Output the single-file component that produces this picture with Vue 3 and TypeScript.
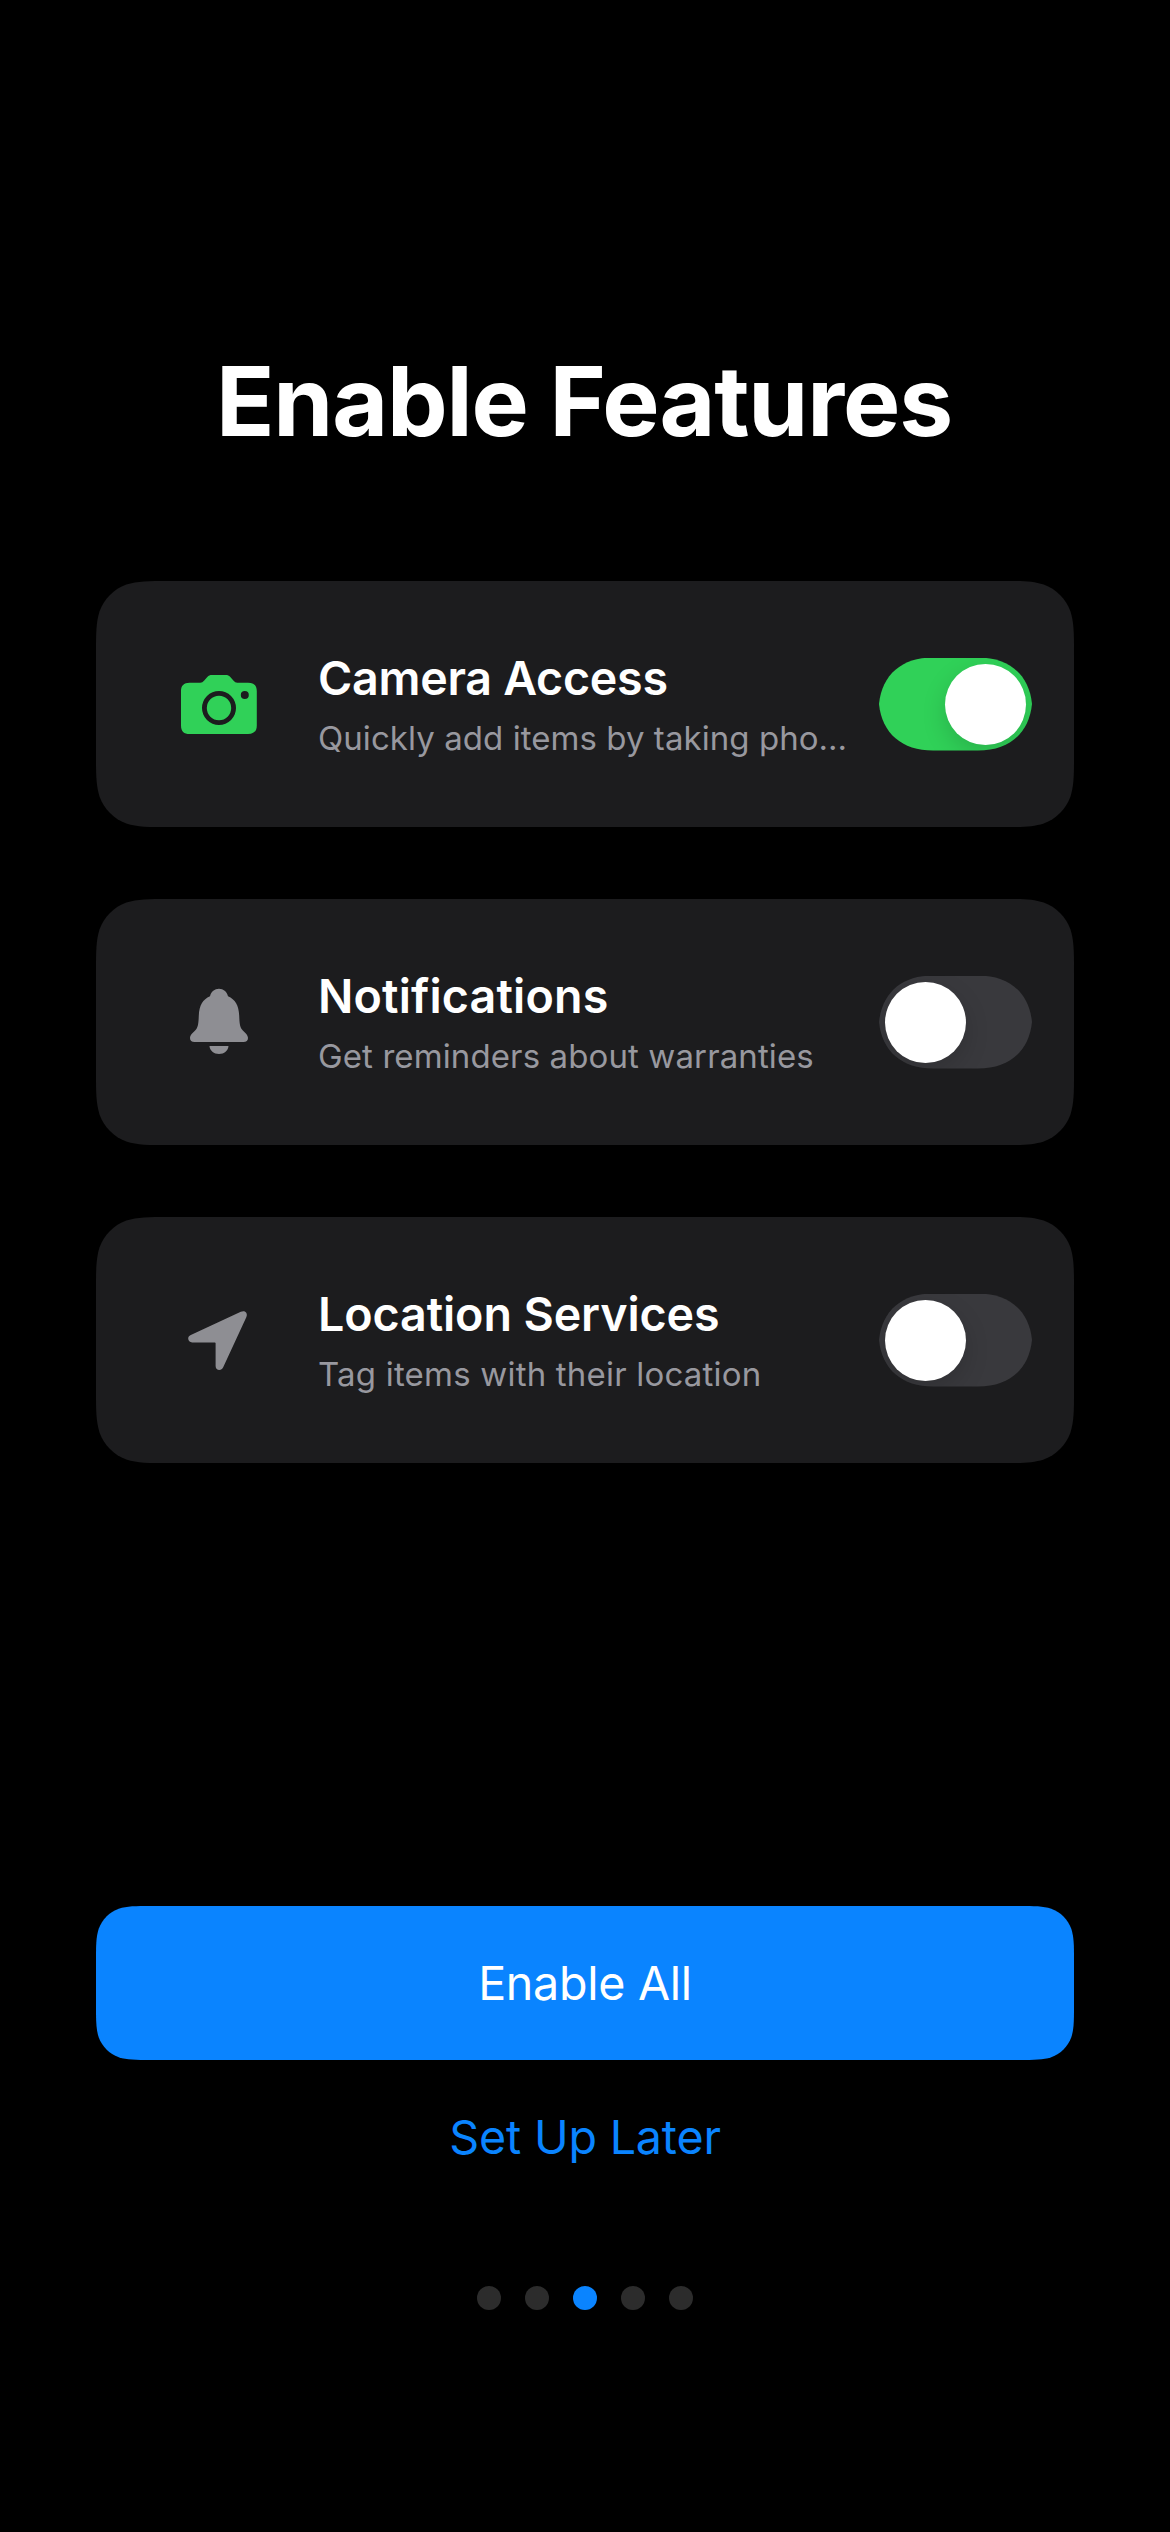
<script setup lang="ts">
import { reactive, ref } from 'vue'

type IconName = 'camera' | 'bell' | 'location'

interface Feature {
  icon: IconName
  title: string
  titleTracking: number
  detail: string
  detailTracking: number
  enabled: boolean
}

const features = reactive<Feature[]>([
  {
    icon: 'camera',
    title: 'Camera Access',
    titleTracking: -0.28,
    detail: 'Quickly add items by taking pho…',
    detailTracking: 0.06,
    enabled: true,
  },
  {
    icon: 'bell',
    title: 'Notifications',
    titleTracking: 0.15,
    detail: 'Get reminders about warranties',
    detailTracking: 0.11,
    enabled: false,
  },
  {
    icon: 'location',
    title: 'Location Services',
    titleTracking: -0.1,
    detail: 'Tag items with their location',
    detailTracking: 0.2,
    enabled: false,
  },
])

const pages = 5
const currentPage = ref(2)

function enableAll(): void {
  features.forEach((f) => (f.enabled = true))
}

// Rounded rectangle with continuous-curvature corners.
function continuousRect(w: number, h: number, r: number): string {
  const corner: [number, number][] = [
    [1.528665, 0],
    [1.088493, 0], [0.868407, 0], [0.631494, 0.074911],
    [0.372824, 0.169059], [0.169059, 0.372824], [0.074911, 0.631494],
    [0, 0.868407], [0, 1.088493], [0, 1.528665],
  ]
  const place = (right: boolean, bottom: boolean, reverse: boolean): string[] => {
    const pts = corner.map(([x, y]) => {
      const px = right ? w - x * r : x * r
      const py = bottom ? h - y * r : y * r
      return `${px.toFixed(2)} ${py.toFixed(2)}`
    })
    return reverse ? pts.reverse() : pts
  }
  const draw = (p: string[]) => `${p[0]} C${p.slice(1).join(' ')}`
  return (
    `M${draw(place(true, false, false))} L${draw(place(true, true, true))} ` +
    `L${draw(place(false, true, false))} L${draw(place(false, false, true))} Z`
  )
}

const cardShape = { clipPath: `path('${continuousRect(978, 246, 48)}')` }
const buttonShape = { clipPath: `path('${continuousRect(978, 154, 36)}')` }
</script>

<template>
  <main class="screen">
    <h1 class="heading">Enable Features</h1>

    <section class="cards">
      <article v-for="f in features" :key="f.title" class="card" :style="cardShape">
        <svg class="icon" :class="{ active: f.enabled }" viewBox="0 0 102 80" aria-hidden="true">
          <template v-if="f.icon === 'camera'">
            <path
              fill-rule="evenodd"
              d="M21.5 18.7H32.2C34 18.7 34.8 18 36 16.7L39.3 13.1C40.8 11.6 41.8 11.1 44 11.1H57.6C59.8 11.1 60.8 11.6 62.3 13.1L65.6 16.7C66.8 18 67.6 18.7 69.4 18.7H80C86 18.7 88.8 21.6 88.8 27.3V61.4C88.8 67.1 86 70 80 70H21.8C15.8 70 13 67.1 13 61.4V27.3C13 21.6 15.8 18.7 21.5 18.7ZM51 27A17 17 0 1 0 51 61A17 17 0 1 0 51 27ZM51 31.8A12.2 12.2 0 1 1 51 56.2A12.2 12.2 0 1 1 51 31.8ZM76.8 27A4 4 0 1 0 76.8 35A4 4 0 1 0 76.8 27Z"
            />
          </template>
          <template v-else-if="f.icon === 'bell'">
            <path
              d="M51 6.8C46.6 6.8 43.2 9.6 42 14.2C34.8 17.4 31.2 23.4 30.8 33.6C30.5 41 30.2 44.5 28.2 47.2C26.2 49.9 22 52.2 22 56C22 58.4 23.6 60 26.6 60H75.4C78.4 60 80 58.4 80 56C80 52.2 75.8 49.9 73.8 47.2C71.8 44.5 71.5 41 71.2 33.6C70.8 23.4 67.2 17.4 60 14.2C58.8 9.6 55.4 6.8 51 6.8Z"
            />
            <path d="M41.5 64H60.5C60.2 68.6 56.2 72 51 72S41.8 68.6 41.5 64Z" />
          </template>
          <template v-else>
            <path
              d="M22.8 35L72.8 11.7C77 9.8 80.2 13 78.3 17.2L55.2 67.2C54.2 69.2 53 69.9 51.4 69.9C49.2 69.9 47.6 68.3 47.6 65.9V43.3C47.6 42.8 47.3 42.5 46.8 42.5H24.2C21.8 42.5 20.2 40.9 20.2 38.6C20.2 37 20.9 35.9 22.8 35Z"
            />
          </template>
        </svg>

        <div class="copy">
          <h2 class="title" :style="{ letterSpacing: `${f.titleTracking}px` }">{{ f.title }}</h2>
          <p class="detail" :style="{ letterSpacing: `${f.detailTracking}px` }">{{ f.detail }}</p>
        </div>

        <button
          class="switch"
          :class="{ on: f.enabled }"
          role="switch"
          :aria-checked="f.enabled"
          :aria-label="f.title"
          @click="f.enabled = !f.enabled"
        >
          <span class="knob"></span>
        </button>
      </article>
    </section>

    <footer class="actions">
      <button class="primary" :style="buttonShape" @click="enableAll">Enable All</button>
      <button class="secondary">Set Up Later</button>
      <nav class="dots">
        <span v-for="n in pages" :key="n" class="dot" :class="{ current: n - 1 === currentPage }"></span>
      </nav>
    </footer>
  </main>
</template>

<style>
body {
  margin: 0;
  background: #000;
}
</style>

<style scoped>
.screen {
  box-sizing: border-box;
  width: 1170px;
  height: 2532px;
  padding: 341px 96px 222px;
  display: flex;
  flex-direction: column;
  background: #000;
  color: #fff;
  font-family: Inter, "Liberation Sans", sans-serif;
  overflow: hidden;
}

h1,
h2,
p {
  margin: 0;
}

button {
  border: 0;
  padding: 0;
  font-family: inherit;
}

.heading {
  height: 120px;
  padding-right: 2px;
  line-height: 120px;
  font-size: 96.3px;
  font-weight: 700;
  letter-spacing: -1.1px;
  text-align: center;
  white-space: nowrap;
}

.cards {
  margin-top: 120px;
  display: flex;
  flex-direction: column;
  gap: 72px;
}

.card {
  box-sizing: border-box;
  height: 246px;
  padding: 0 42px 0 72px;
  display: flex;
  align-items: center;
  background: #1c1c1e;
}

.icon {
  flex: none;
  width: 102px;
  height: 80px;
  fill: #8e8e93;
}

.icon.active {
  fill: #30d158;
}

.copy {
  flex: 1;
  min-width: 0;
  margin-left: 48px;
  padding-top: 2px;
  white-space: nowrap;
}

.title {
  height: 60px;
  line-height: 60px;
  font-size: 46.6px;
  font-weight: 600;
}

.detail {
  height: 48px;
  margin-top: 6px;
  line-height: 48px;
  font-size: 33px;
  color: #98989f;
}

.switch {
  flex: none;
  box-sizing: border-box;
  width: 153px;
  height: 93px;
  padding: 6px;
  display: flex;
  justify-content: flex-start;
  background: #39393d;
  clip-path: path("M0 46.5C3 17 23 0 54 0H99C130 0 150 17 153 46.5C150 76 130 93 99 93H54C23 93 3 76 0 46.5Z");
}

.switch.on {
  justify-content: flex-end;
  background: #30d158;
}

.knob {
  width: 81px;
  height: 81px;
  border-radius: 50%;
  background: #fff;
  box-shadow: 0 9px 24px rgba(0, 0, 0, 0.15);
}

.actions {
  margin-top: auto;
  display: flex;
  flex-direction: column;
  align-items: center;
}

.primary {
  width: 978px;
  height: 154px;
  background: #0a84ff;
  color: #fff;
  font-size: 46.6px;
  letter-spacing: -0.28px;
}

.secondary {
  height: 154px;
  background: none;
  color: #0a84ff;
  font-size: 46.6px;
  letter-spacing: -0.17px;
}

.dots {
  margin-top: 72px;
  display: flex;
  gap: 24px;
}

.dot {
  width: 24px;
  height: 24px;
  border-radius: 50%;
  background: #2c2c2c;
}

.dot.current {
  background: #0a84ff;
}
</style>
